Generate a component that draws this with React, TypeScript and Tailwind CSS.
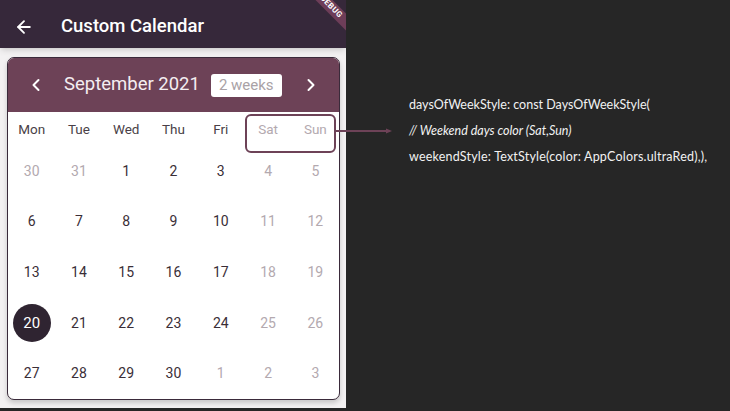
import { ArrowLeft, ChevronLeft, ChevronRight } from 'lucide-react';

type Day = { n: number; muted?: boolean; selected?: boolean };

const weekdays = ['Mon', 'Tue', 'Wed', 'Thu', 'Fri', 'Sat', 'Sun'];

const weeks: Day[][] = [
    [{ n: 30, muted: true }, { n: 31, muted: true }, { n: 1 }, { n: 2 }, { n: 3 }, { n: 4, muted: true }, { n: 5, muted: true }],
    [{ n: 6 }, { n: 7 }, { n: 8 }, { n: 9 }, { n: 10 }, { n: 11, muted: true }, { n: 12, muted: true }],
    [{ n: 13 }, { n: 14 }, { n: 15 }, { n: 16 }, { n: 17 }, { n: 18, muted: true }, { n: 19, muted: true }],
    [{ n: 20, selected: true }, { n: 21 }, { n: 22 }, { n: 23 }, { n: 24 }, { n: 25, muted: true }, { n: 26, muted: true }],
    [{ n: 27 }, { n: 28 }, { n: 29 }, { n: 30 }, { n: 1, muted: true }, { n: 2, muted: true }, { n: 3, muted: true }],
];

export default function App() {
    return (
        <div className="relative flex w-[730px] h-[411px] overflow-hidden bg-[#262626] font-['Roboto',sans-serif]">
            {/* Phone */}
            <div className="relative w-[346px] h-[408px] bg-[#f3f1f2] overflow-hidden flex flex-col">
                {/* App bar */}
                <div className="h-[48px] pt-[5px] bg-[#36283a] flex items-center shrink-0 shadow-md">
                    <ArrowLeft className="ml-[14px] text-white" size={20} strokeWidth={2.2} />
                    <span className="ml-[27px] text-white text-[18.5px] font-medium">Custom Calendar</span>
                </div>

                {/* Card */}
                <div className="mt-[9px] ml-[7px] w-[333px] border-[1.5px] border-[#3a2a3a] rounded-[7px] overflow-hidden bg-white shadow-[0_3px_5px_rgba(0,0,0,0.18)]">
                    <div className="h-[54px] bg-[#6d4257] flex items-center">
                        <ChevronLeft className="ml-[18px] text-white" size={20} strokeWidth={2.4} />
                        <span className="ml-[18px] text-[18.5px] text-[#f4eef1]">September 2021</span>
                        <span className="ml-[11px] h-[23px] px-[8px] bg-white rounded-[3px] text-[15px] leading-[23px] text-[#a9a2a6]">2 weeks</span>
                        <ChevronRight className="ml-auto mr-[18px] text-white" size={20} strokeWidth={2.4} />
                    </div>
                    <div className="grid grid-cols-7 h-[34px] items-center">
                        {weekdays.map((d, i) => (
                            <div key={d} className={`text-center text-[13.5px] ${i >= 5 ? 'text-[#b3a9af]' : 'text-[#4a3f47]'}`}>
                                {d}
                            </div>
                        ))}
                    </div>
                    {weeks.map((week, wi) => (
                        <div key={wi} className="grid grid-cols-7 h-[50.6px] items-center">
                            {week.map((day, di) => (
                                <div key={di} className="flex justify-center">
                                    {day.selected ? (
                                        <div className="w-[38px] h-[38px] rounded-full bg-[#2f2431] text-white text-[15px] flex items-center justify-center">
                                            {day.n}
                                        </div>
                                    ) : (
                                        <span className={`text-[14px] ${day.muted ? 'text-[#b3a9af]' : 'text-[#3a2e37]'}`}>{day.n}</span>
                                    )}
                                </div>
                            ))}
                        </div>
                    ))}
                </div>

                {/* Weekend highlight */}
                <div className="absolute left-[245px] top-[114px] w-[91px] h-[39px] border-2 border-[#6d4257] rounded-[6px]" />

                {/* Debug banner */}
                <div className="absolute right-[-30px] top-[1px] w-[90px] h-[12px] rotate-45 bg-[#6d3d58] text-white text-[8px] font-bold leading-[12px] text-center tracking-[0.5px]">
                    DEBUG
                </div>
            </div>

            {/* Arrow */}
            <svg className="absolute left-[334px] top-[126px]" width="62" height="10" viewBox="0 0 62 10">
                <line x1="0" y1="5" x2="56" y2="5" stroke="#6d4257" strokeWidth="2" />
                <polygon points="52,2.5 58,5 52,7.5" fill="#6d4257" />
            </svg>

            {/* Notes */}
            <div className="pl-[63px] pt-[92px] text-[#f2f2f2] text-[12.5px] leading-[26px] font-['Lato',sans-serif]">
                <div>daysOfWeekStyle: const DaysOfWeekStyle(</div>
                <div className="italic">// Weekend days color (Sat,Sun)</div>
                <div className="tracking-[0.2px]">weekendStyle: TextStyle(color: AppColors.ultraRed),),</div>
            </div>
        </div>
    );
}
